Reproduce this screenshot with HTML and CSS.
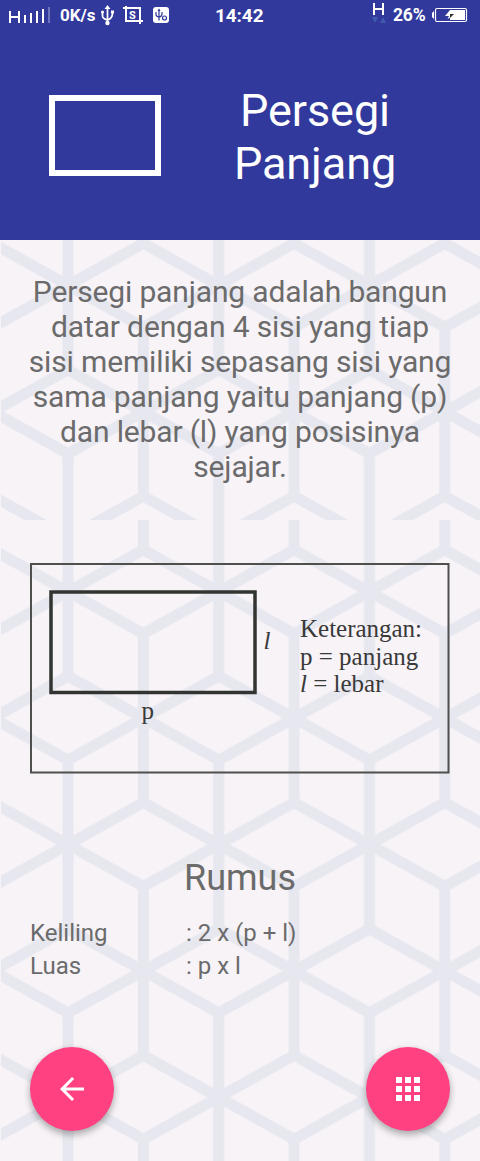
FILE: index.html
```html
<!DOCTYPE html>
<html lang="id">
<head>
<meta charset="utf-8">
<title>Persegi Panjang</title>
<link rel="stylesheet" href="styles.css">
</head>
<body>
<svg class="defs" width="0" height="0">
  <defs>
    <pattern id="cubes" width="150.7" height="252.8" patternUnits="userSpaceOnUse" patternTransform="translate(68 71.7)">
      <g class="lines">
        <path d="M0-5V84.4M0 168.4V258M150.7-5V84.4M150.7 168.4V258M75.35 42V210.8"/>
        <path d="M0 0L75.35 42L150.7 0M0 84.4L75.35 126.4L150.7 84.4M0 168.4L75.35 126.4L150.7 168.4M0 252.8L75.35 210.8L150.7 252.8"/>
        <path d="M-75.35 42L75.35-42M75.35-42L226.05 42M-75.35 210.8L75.35 294.8M75.35 294.8L226.05 210.8"/>
      </g>
    </pattern>
  </defs>
</svg>
<div class="screen">
  <header class="header">
    <div class="status">
      <svg class="s-signal" width="60" height="30" viewBox="0 0 60 30">
        <path class="w2" d="M10 11V23M19 11V23M10 17H19M25 15V23M31 13V23M37 11V23M43 9V23"/>
        <path class="w2 dim" d="M49 7V23"/>
      </svg>
      <span class="s-speed">0K/s</span>
      <svg class="s-icons" width="115" height="30" viewBox="98 0 115 30">
        <path class="w15" d="M107.500 7V24M102.500 12V16Q102.500 18.500 107.500 20Q112.500 18.500 112.500 13"/>
        <path class="fill" d="M104.500 9L107.500 5L110.500 9Z"/><circle class="fill" cx="107.500" cy="23" r="2.200"/><circle class="fill" cx="102.500" cy="12" r="1.500"/><path class="fill" d="M111 10.500h3v3h-3z"/>
        <path class="w2" d="M123 8H140V24M126 6V21H143"/>
        <text class="crop-s" x="129" y="18.500">S</text>
        <rect class="fill" x="153" y="7" width="16" height="16" rx="3"/>
        <path class="badge" d="M159 10V20.500M156 12V14.500Q156 16.500 159 17Q162 16.500 162 14V12M158 11L159 9.500L160 11"/>
        <circle class="badge" cx="164.500" cy="18" r="2"/>
      </svg>
      <span class="s-time">14:42</span>
      <svg class="s-data" width="22" height="30" viewBox="368 0 22 30">
        <path class="w2" d="M374 3V15M383 3V15M374 9H383"/>
        <path class="arrows" d="M372 17h6l-3 6zM380 23h6l-3-6z"/>
      </svg>
      <span class="s-pct">26%</span>
      <svg class="s-batt" width="44" height="30" viewBox="430 0 44 30">
        <rect class="w1" x="435.500" y="8.500" width="31" height="13" rx="1.500"/>
        <path class="fill" d="M450 10h15v10h-15zM434 11v8l-2-2v-4z"/>
        <path class="fill" d="M450 10L445 16H449L447.500 19L451 17z"/>
        <path class="bolt" d="M450 14H454L450 18z"/>
      </svg>
    </div>
    <div class="hero">
      <div class="shape"></div>
      <h1 class="title">Persegi Panjang</h1>
    </div>
  </header>
  <section class="intro">
    <svg class="backdrop" width="479" height="280" viewBox="1 0 479 280"><g transform="translate(0 -26.400)"><rect class="tile" y="20" width="480" height="300"/></g></svg>
    <p class="lead">Persegi panjang adalah bangun datar dengan 4 sisi yang tiap sisi memiliki sepasang sisi yang sama panjang yaitu panjang (p) dan lebar (l) yang posisinya sejajar.</p>
  </section>
  <main class="content">
    <svg class="backdrop" width="479" height="641" viewBox="1 0 479 641"><rect class="tile" width="480" height="641"/></svg>
    <svg class="figure" width="420" height="211" viewBox="30 563 420 211">
      <rect class="frame" x="31" y="564" width="417.500" height="208.500"/>
      <rect class="plane" x="51" y="592" width="204" height="100.500"/>
      <text x="141.500" y="718.500">p</text>
      <text class="it" x="263.500" y="648.500">l</text>
      <text x="300" y="636.500" textLength="122">Keterangan:</text>
      <text x="300" y="665">p = panjang</text>
      <text x="300" y="692"><tspan class="it">l</tspan> = lebar</text>
    </svg>
    <h2 class="subtitle">Rumus</h2>
    <dl class="formulas">
      <dt>Keliling</dt><dd>: 2 x (p + l)</dd>
      <dt>Luas</dt><dd>: p x l</dd>
    </dl>
    <nav class="actions">
      <button class="fab" aria-label="Kembali"><svg width="36" height="36" viewBox="0 0 24 24"><path d="M20 11H7.830l5.590-5.590L12 4l-8 8 8 8 1.410-1.410L7.830 13H20v-2z"/></svg></button>
      <button class="fab" aria-label="Menu"><svg width="36" height="36" viewBox="0 0 24 24"><path d="M4 8h4V4H4v4zm6 12h4v-4h-4v4zm-6 0h4v-4H4v4zm0-6h4v-4H4v4zm6 0h4v-4h-4v4zm6-10v4h4V4h-4zm-6 4h4V4h-4v4zm6 6h4v-4h-4v4zm0 6h4v-4h-4v4z"/></svg></button>
    </nav>
  </main>
</div>
</body>
</html>
```

FILE: styles.css
```css
* { box-sizing: border-box; margin: 0; padding: 0; }
body { background: #f7f3f7; font-family: Roboto, sans-serif; color: #6b6b6b; }
.defs { position: absolute; }
.screen { width: 480px; height: 1161px; overflow: hidden; }
.header { height: 240px; background: #313a9c; color: #fff; }
.status { display: flex; height: 30px; line-height: 31px; font-size: 17px; font-weight: 700; white-space: nowrap; }
.status svg { flex: none; }
.s-speed { width: 38px; }
.s-icons { margin-right: 2px; }
.s-time { width: 153px; font-size: 19px; letter-spacing: -0.1px; }
.s-pct { margin-left: 3px; width: 37px; font-size: 17.500px; letter-spacing: -0.2px; }
.w2, .w15, .w1 { fill: none; stroke: #fff; stroke-width: 2; }
.w15 { stroke-width: 1.700; }
.w1 { stroke-width: 1.200; }
.status .dim { stroke: #6b73bd; }
.fill { fill: #fff; }
.badge { fill: none; stroke: #313a9c; stroke-width: 1.200; }
.bolt { fill: #313131; }
.arrows { fill: #425aad; }
.crop-s { fill: #fff; font-size: 11px; font-weight: 700; }
.hero { display: grid; grid-template-columns: 210px 210px; height: 210px; align-items: start; padding-top: 54px; }
.shape { width: 112px; height: 81px; margin: 11px 0 0 49px; border: 6px solid #fff; }
.title { font-size: 45px; line-height: 53px; font-weight: 400; letter-spacing: -0.1px; text-align: center; }
.intro, .content { position: relative; isolation: isolate; }
.backdrop { position: absolute; top: 0; left: 1px; z-index: -1; }
.lines { fill: none; stroke: #e7e7ef; stroke-width: 11; }
.tile { fill: url(#cubes); }
.intro { height: 280px; padding: 34px 28px 0; }
.lead { font-size: 30px; line-height: 35px; letter-spacing: -0.15px; text-align: center; }
.content { height: 641px; padding: 43px 30px 0; }
.figure { display: block; font-family: "Liberation Serif", serif; font-size: 25px; fill: #393939; }
.it { font-style: italic; }
.frame { fill: none; stroke: #4f4f4d; stroke-width: 2; }
.plane { fill: none; stroke: #313431; stroke-width: 3.500; }
.subtitle { margin-top: 83px; font-size: 36px; line-height: 42px; font-weight: 400; text-align: center; }
.formulas { display: grid; grid-template-columns: 156px 1fr; margin-top: 18px; font-size: 24px; line-height: 33px; }
.actions { display: flex; justify-content: space-between; margin-top: 64px; }
.fab { display: grid; place-items: center; width: 84px; height: 84px; border: 0; border-radius: 50%; background: #ff4081; fill: #fff; box-shadow: 0 4px 7px rgba(0,0,0,.28), 0 1px 10px rgba(0,0,0,.06); }
```
